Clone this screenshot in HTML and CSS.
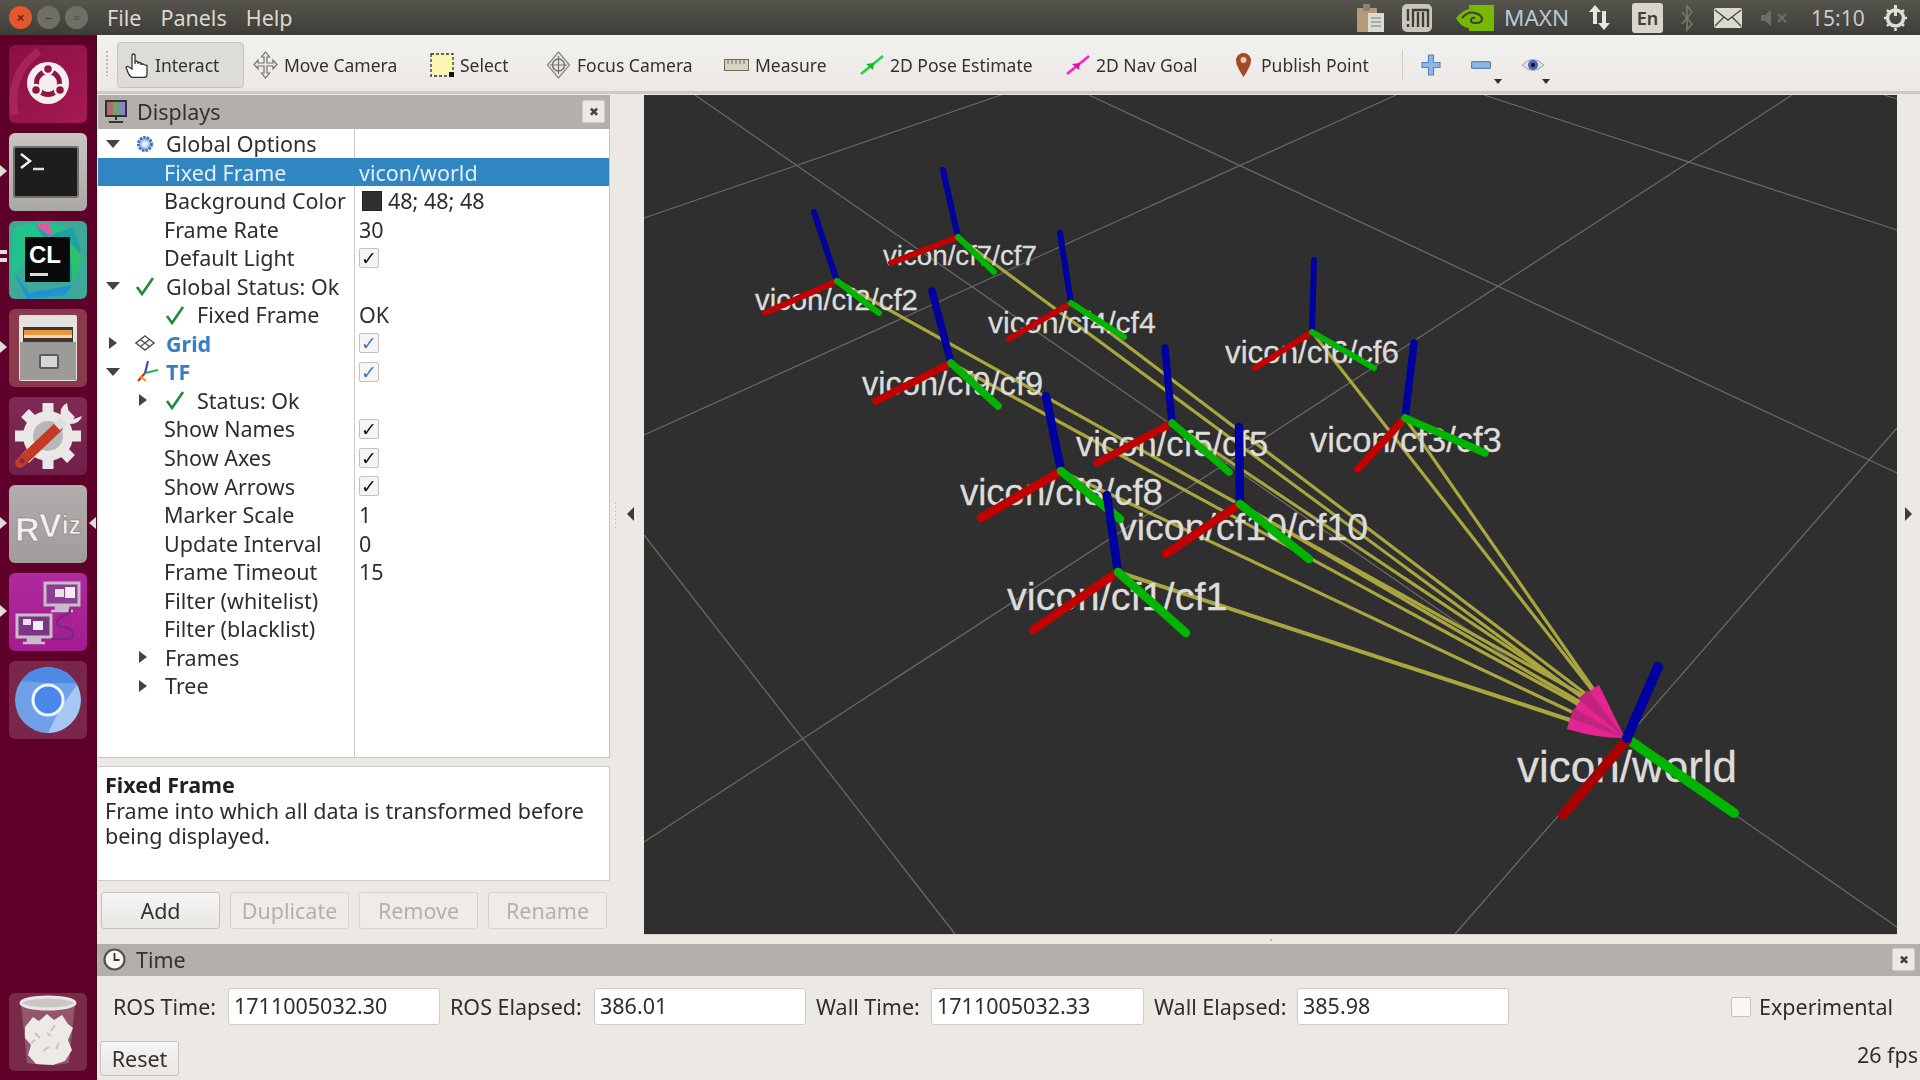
FILE: index.html
```html
<!DOCTYPE html>
<html lang="en">
<head>
<meta charset="utf-8">
<title>RViz</title>
<link rel="stylesheet" href="styles.css">
</head>
<body>
<div class="screen">
  <header class="topbar">
    <div class="winbtns">
      <span class="wb close">×</span><span class="wb">–</span><span class="wb">▫</span>
    </div>
    <nav class="menu"><span>File</span><span>Panels</span><span>Help</span></nav>
    <div class="tray">
      <svg class="t-i" width="29" height="29" viewBox="0 0 29 29"><rect x="1" y="5" width="20" height="24" rx="1" fill="#b59a78"/><rect x="7" y="1" width="7" height="7" rx="1" fill="#8f8070"/><rect x="12" y="10" width="16" height="19" fill="#dcdad6"/><path d="M15 15h10M15 19h10M15 23h10" stroke="#9a9a96" stroke-width="1.4"/></svg>
      <svg class="t-i" width="32" height="30" viewBox="0 0 32 30"><rect x="1" y="1" width="30" height="28" rx="5" fill="#c9c6bd"/><path d="M7 6v12M7 21v3M12 24v-17h15v17M17 9v15M22 9v15" stroke="#3f3e38" stroke-width="2.4" fill="none"/></svg>
      <svg class="t-i" width="39" height="28" viewBox="0 0 39 28"><path d="M14 1h25v26H14z" fill="#76b900"/><path d="M1 14Q10 3 21 5q8 2 12 9-10 12-20 10Q5 22 1 14z" fill="#76b900"/><path d="M7 14q6-7 13-5t7 6-6 4-5-3 4-2" stroke="#3f3e38" stroke-width="2" fill="none"/></svg>
      <span class="t-maxn">MAXN</span>
      <svg class="t-i" width="25" height="29" viewBox="0 0 25 29"><path d="M8 2l-6 7h4v12h4V9h4zM17 27l6-7h-4V8h-4v12h-4z" fill="#e8e6e0"/></svg>
      <span class="t-en">En</span>
      <svg class="t-i" width="12" height="28" viewBox="0 0 12 28"><path d="M1 8l10 12-5 6V2l5 6L1 20" stroke="#77766f" stroke-width="1.6" fill="none"/></svg>
      <svg class="t-i" width="28" height="20" viewBox="0 0 28 20"><rect width="28" height="20" rx="2" fill="#dbd9d2"/><path d="M1 2l13 10L27 2M1 18l9-9M27 18l-9-9" stroke="#4a4943" stroke-width="1.4" fill="none"/></svg>
      <svg class="t-i" width="27" height="16" viewBox="0 0 27 16"><path d="M0 5h4l6-5v16l-6-5H0z" fill="#6e6d66"/><path d="M17 4l8 8M25 4l-8 8" stroke="#6e6d66" stroke-width="2"/></svg>
      <span class="t-clock">15:10</span>
      <svg class="t-i" width="25" height="27" viewBox="0 0 25 27"><circle cx="12.500" cy="14" r="8" fill="none" stroke="#e0ded8" stroke-width="3.500"/><path d="M12.500 1v11" stroke="#e0ded8" stroke-width="3"/><path d="M12.500 3v24M1 14h23M4 6l17 16M21 6L4 22" stroke="#e0ded8" stroke-width="2.500" stroke-dasharray="3 18"/></svg>
    </div>
  </header>

  <div class="desk">
    <aside class="launcher">
      <div class="tile t-ubuntu"><svg viewBox="0 0 78 78"><path d="M6 70Q-2 30 30 6" fill="none" stroke="#b8356a" stroke-width="8" opacity=".5"/><circle cx="39" cy="38" r="21" fill="#f4eef0"/><circle cx="39" cy="38" r="11.500" fill="none" stroke="#8c1743" stroke-width="5"/><circle cx="39" cy="24" r="5" fill="#8c1743" stroke="#f4eef0" stroke-width="2.500"/><circle cx="27" cy="45" r="5" fill="#8c1743" stroke="#f4eef0" stroke-width="2.500"/><circle cx="51" cy="45" r="5" fill="#8c1743" stroke="#f4eef0" stroke-width="2.500"/></svg></div>
      <div class="tile t-term pip"><svg viewBox="0 0 78 78"><rect x="5" y="14" width="64" height="50" rx="2" fill="#1d1d1b" stroke="#6f6f6c" stroke-width="2"/><path d="M12 21l9 7-9 7" stroke="#eee" stroke-width="2.500" fill="none"/><path d="M24 36h11" stroke="#ddd" stroke-width="2.500"/></svg></div>
      <div class="tile t-cl pip2"><svg viewBox="0 0 78 78"><path d="M4 8l22-8 30 6-40 34-14 24z" fill="#21c28c"/><path d="M24 0l18 14 22-8 8 22-10 34z" fill="#1ea4a0"/><path d="M26 4l14-3 4 16z" fill="#e05a9f"/><path d="M4 50l16 22 44-8-8 10-38 4z" fill="#1d93d4"/><path d="M60 20l14 16-10 26z" fill="#2bc16f"/><rect x="16" y="16" width="45" height="45" fill="#08090b"/><text class="cl-text" x="20" y="42">CL</text><rect x="21" y="52" width="18" height="3" fill="#ddd"/></svg></div>
      <div class="tile t-files pip"><svg viewBox="0 0 78 78"><rect x="10" y="6" width="58" height="66" rx="2" fill="#e4e2df"/><rect x="14" y="18" width="50" height="16" fill="#3d3631"/><rect x="15" y="21" width="48" height="5" fill="#e8963e"/><rect x="15" y="26" width="48" height="3" fill="#f5d9a9"/><path d="M11 33h56v38H11z" fill="#9c9b99"/><rect x="31" y="46" width="18" height="13" rx="1" fill="#d8d6d3" stroke="#5d5c5a" stroke-width="2"/></svg></div>
      <div class="tile t-settings"><svg viewBox="0 0 78 78"><path d="M39 6v66M6 39h66M16 16l46 46M62 16L16 62" stroke="#e9e8e6" stroke-width="11"/><circle cx="39" cy="39" r="25" fill="#e9e8e6"/><circle cx="39" cy="39" r="15" fill="#b9b6b6"/><path d="M11 66l38-36" stroke="#c43a24" stroke-width="10" stroke-linecap="round"/><path d="M48 30l10-10" stroke="#e0dedc" stroke-width="9"/><path d="M58 6a11 11 0 0 0-3 18 11 11 0 0 0 18-5l-8 3-5-5z" fill="#e9e8e6"/><circle cx="13" cy="64" r="2.500" fill="#7b2a50"/></svg></div>
      <div class="tile t-rviz pip pip-r"><svg viewBox="0 0 78 78"><text class="rviz-text" x="6" y="56">R<tspan dy="-4">V</tspan><tspan class="rv-iz" dy="-3">iz</tspan></text></svg></div>
      <div class="tile t-ws pip"><svg viewBox="0 0 78 78"><rect x="36" y="10" width="34" height="22" fill="#8a3f90" stroke="#c9bcca" stroke-width="3"/><rect x="46" y="16" width="9" height="8" fill="#e8dde9"/><rect x="56" y="14" width="10" height="11" fill="#f3ecf4"/><path d="M47 33h12v5H47zM42 38h22" stroke="#c9bcca" stroke-width="2.500" fill="#c9bcca"/><rect x="8" y="42" width="34" height="22" fill="#7a3584" stroke="#c9bcca" stroke-width="3"/><rect x="14" y="46" width="8" height="6" fill="#e8dde9"/><rect x="24" y="48" width="10" height="9" fill="#f3ecf4"/><path d="M19 65h12v4H19zM14 70h22" stroke="#c9bcca" stroke-width="2.500" fill="#c9bcca"/><path d="M42 66h14q10 0 8-6t-12-6q-8-4 0-10 12-4 8-8" stroke="#6d2b7b" stroke-width="2" fill="none"/></svg></div>
      <div class="tile t-chrome"><svg viewBox="0 0 78 78"><circle cx="39" cy="39" r="33" fill="#6fa0e8"/><path d="M12 20a33 33 0 0 1 55 2H39z" fill="#4d8ae4"/><path d="M39 72a33 33 0 0 0 29-48l-16 22z" fill="#a8c6f3"/><circle cx="39" cy="39" r="15" fill="#4a87eb" stroke="#eef3fc" stroke-width="3"/></svg></div>
      <div class="spacer"></div>
      <div class="tile t-trash"><svg viewBox="0 0 78 78"><path d="M12 10h54l-6 60q-21 4-42 0z" fill="#9d6a7d" opacity=".7"/><ellipse cx="39" cy="10" rx="27" ry="6" fill="#c9c5c4" stroke="#e8e6e5" stroke-width="3"/><path d="M16 34l8-10 6 4 8-7 7 6 8-5 6 9 5 4-5 12 4 10-7 11-12 4-17-1-8-9 3-10-6-7z" fill="#ece9e7"/><path d="M26 40l5 5M46 32l-4 6M34 58l6-4M50 50l-3 6M22 50l4-3M38 40l4 3" stroke="#c8c4c2" stroke-width="2"/></svg></div>
    </aside>

    <main class="app">
      <div class="toolbar">
        <div class="handle"></div>
        <div class="tool tool-on"><svg width="24" height="26" viewBox="0 0 24 26"><path d="M7 15V3q1.500-2 3 0v9-2q2-1.500 3 0v2-1q2-1 3 0v2-.5q2-1 3 0 1 .5 3 1v9q0 3-3 3H7q-3-2-4-5l-2-5q1-2 3-.5L7 17z" fill="#fff" stroke="#333" stroke-width="1.300"/></svg><span>Interact</span></div>
        <div class="tool"><svg width="25" height="28" viewBox="0 0 25 28"><path d="M12.500 1l4 5h-2.500v6h6V9l4 4.500-4 4.500v-3h-6v7h2.500l-4 5-4-5H11v-7H5v3l-4-4.500L5 9v3h6V6H8.500z" fill="#e8e6e3" stroke="#77746f" stroke-width="1.200"/></svg><span>Move Camera</span></div>
        <div class="tool"><svg width="24" height="24" viewBox="0 0 24 24"><rect x="1" y="1" width="22" height="22" fill="#fbf6b4" stroke="#333" stroke-width="1.300" stroke-dasharray="3 2"/><rect x="19" y="19" width="5" height="5" fill="#111"/></svg><span>Select</span></div>
        <div class="tool"><svg width="25" height="28" viewBox="0 0 25 28"><path d="M12.500 1l11 13-11 13-11-13z" fill="#e8e6e3" stroke="#8a8784" stroke-width="1.200"/><circle cx="12.500" cy="14" r="6" fill="none" stroke="#77746f" stroke-width="1.500"/><path d="M12.500 5v18M4 14h17" stroke="#77746f" stroke-width="1.200"/></svg><span>Focus Camera</span></div>
        <div class="tool"><svg width="25" height="12" viewBox="0 0 25 12"><rect x=".5" y=".5" width="24" height="11" fill="#d9d4ba" stroke="#6e6b64"/><path d="M4 1v4M8 1v4M12 1v4M16 1v4M20 1v4" stroke="#6e6b64"/></svg><span>Measure</span></div>
        <div class="tool"><svg width="24" height="20" viewBox="0 0 24 20"><path d="M1 19L23 1" stroke="#1fd43c" stroke-width="2.500"/><path d="M6 9l8-1-1 7z" fill="#12b52e"/></svg><span>2D Pose Estimate</span></div>
        <div class="tool"><svg width="24" height="20" viewBox="0 0 24 20"><path d="M1 19L23 1" stroke="#ff1fcb" stroke-width="2.500"/><path d="M6 9l8-1-1 7z" fill="#d910a8"/></svg><span>2D Nav Goal</span></div>
        <div class="tool tool-pin"><svg width="17" height="26" viewBox="0 0 17 26"><path d="M8.500 25Q1 14 1 8.500a7.500 7.500 0 0 1 15 0Q16 14 8.500 25z" fill="#a4482a"/><circle cx="8.500" cy="8" r="3" fill="#e9c9b0"/></svg><span>Publish Point</span></div>
        <div class="tsep"></div>
        <div class="tbtn"><svg width="20" height="22" viewBox="0 0 20 22"><path d="M7.500 1h5v7.500H19v5h-6.500V21h-5v-7.500H1v-5h6.500z" fill="#8fb6e2" stroke="#4f86c4" stroke-width="1.200"/></svg></div>
        <div class="tbtn drop"><svg width="20" height="8" viewBox="0 0 20 8"><rect x=".6" y=".6" width="18.800" height="6.800" rx="1" fill="#8fb6e2" stroke="#4f86c4" stroke-width="1.200"/></svg></div>
        <div class="tbtn drop"><svg width="24" height="16" viewBox="0 0 24 16"><path d="M1 8q11-11 22 0-11 11-22 0z" fill="#dfe3ee" stroke="#9b9fb0"/><circle cx="12" cy="8" r="5" fill="#4a63b5"/><circle cx="12" cy="8" r="2" fill="#111"/></svg></div>
      </div>

      <div class="mid">
        <section class="left">
          <div class="ptitle">
            <svg width="24" height="25" viewBox="0 0 24 25"><rect x="1" y="1" width="22" height="17" fill="#333"/><rect x="3" y="3" width="6" height="13" fill="#b56a6a"/><rect x="9" y="3" width="6" height="13" fill="#6aa56a"/><rect x="15" y="3" width="6" height="13" fill="#8585c5"/><path d="M11 18h2v3h-2zM5 22h14v2H5z" fill="#333"/></svg>
            <span class="ptext">Displays</span>
            <span class="pclose">✖</span>
          </div>
          <div class="tree">
            <div class="row"><div class="name"><i class="tw open"></i><svg class="ic ic0o" width="20" height="20" viewBox="0 0 20 20"><circle cx="10" cy="10" r="6.500" fill="#a9c4ec" stroke="#3f73c6" stroke-width="3" stroke-dasharray="2.500 1"/><circle cx="10" cy="10" r="3" fill="#e6eefb"/></svg><span class="tx tx0">Global Options</span></div><div class="val"></div></div>
            <div class="row sel"><div class="name nm1"><span>Fixed Frame</span></div><div class="val">vicon/world</div></div>
            <div class="row"><div class="name nm1"><span>Background Color</span></div><div class="val"><i class="swatch"></i>48; 48; 48</div></div>
            <div class="row"><div class="name nm1"><span>Frame Rate</span></div><div class="val">30</div></div>
            <div class="row"><div class="name nm1"><span>Default Light</span></div><div class="val"><i class="cb">✓</i></div></div>
            <div class="row"><div class="name"><i class="tw open"></i><svg class="ic ic0o" width="20" height="20" viewBox="0 0 20 20"><path d="M2 11l5 7L18 2" fill="none" stroke="#1f8a3b" stroke-width="2.600"/></svg><span class="tx tx0">Global Status: Ok</span></div><div class="val"></div></div>
            <div class="row"><div class="name nm2"><svg class="ic" width="20" height="20" viewBox="0 0 20 20"><path d="M2 11l5 7L18 2" fill="none" stroke="#1f8a3b" stroke-width="2.600"/></svg><span class="tx">Fixed Frame</span></div><div class="val">OK</div></div>
            <div class="row"><div class="name"><i class="tw closed c0"></i><svg class="ic ic0c" width="20" height="16" viewBox="0 0 20 16"><path d="M10 1l9 7-9 7-9-7zM5.500 4.500l9 7M14.500 4.500l-9 7" fill="none" stroke="#55534f" stroke-width="1.500"/></svg><span class="tx tx0 blue">Grid</span></div><div class="val"><i class="cb b">✓</i></div></div>
            <div class="row"><div class="name"><i class="tw open"></i><svg class="ic ic0o" width="24" height="24" viewBox="0 0 24 24"><path d="M10 13L3 21" stroke="#e02020" stroke-width="2"/><path d="M10 13l13-3" stroke="#1db93a" stroke-width="2"/><path d="M10 13L13 1" stroke="#3a3ad0" stroke-width="2"/><path d="M5 16l6 5" stroke="#e0a020" stroke-width="2"/></svg><span class="tx tx0tf blue">TF</span></div><div class="val"><i class="cb b">✓</i></div></div>
            <div class="row"><div class="name nm2"><i class="tw closed c1"></i><svg class="ic ic1c" width="20" height="20" viewBox="0 0 20 20"><path d="M2 11l5 7L18 2" fill="none" stroke="#1f8a3b" stroke-width="2.600"/></svg><span class="tx">Status: Ok</span></div><div class="val"></div></div>
            <div class="row"><div class="name nm1"><span>Show Names</span></div><div class="val"><i class="cb">✓</i></div></div>
            <div class="row"><div class="name nm1"><span>Show Axes</span></div><div class="val"><i class="cb">✓</i></div></div>
            <div class="row"><div class="name nm1"><span>Show Arrows</span></div><div class="val"><i class="cb">✓</i></div></div>
            <div class="row"><div class="name nm1"><span>Marker Scale</span></div><div class="val">1</div></div>
            <div class="row"><div class="name nm1"><span>Update Interval</span></div><div class="val">0</div></div>
            <div class="row"><div class="name nm1"><span>Frame Timeout</span></div><div class="val">15</div></div>
            <div class="row"><div class="name nm1"><span>Filter (whitelist)</span></div><div class="val"></div></div>
            <div class="row"><div class="name nm1"><span>Filter (blacklist)</span></div><div class="val"></div></div>
            <div class="row"><div class="name nm2"><i class="tw closed c1 c1t"></i><span>Frames</span></div><div class="val"></div></div>
            <div class="row"><div class="name nm2"><i class="tw closed c1 c1t"></i><span>Tree</span></div><div class="val"></div></div>
          </div>
          <div class="hsplit"></div>
          <div class="desc"><b>Fixed Frame</b><br>Frame into which all data is transformed before being displayed.</div>
          <div class="btns">
            <button class="btn">Add</button>
            <button class="btn dis">Duplicate</button>
            <button class="btn dis">Remove</button>
            <button class="btn dis">Rename</button>
          </div>
        </section>

        <div class="vsplit"><i class="dots"></i><i class="arrow-l"></i></div>

        <section class="viewwrap">
          <svg class="scene" viewBox="644 95 1253 839" width="1253" height="839">
            <rect x="644" y="95" width="1253" height="839" fill="#2f2f2f"/>
            <g class="gridl">
              <path d="M695 95L1897 927"/>
              <path d="M644 535L955 934"/>
              <path d="M1089 95L1897 473"/>
              <path d="M1484 95L1897 230"/>
              <path d="M1884 95L1897 99"/>
              <path d="M644 218L1001 95"/>
              <path d="M644 435L1396 95"/>
              <path d="M644 842L1792 95"/>
              <path d="M1455 934L1897 428"/>
            </g>
            <g class="rays">
              <path d="M837 281L1586 697"/>
              <path d="M958 237L1584 699"/>
              <path d="M1071 303L1586 694"/>
              <path d="M951 363L1578 704"/>
              <path d="M1172 423L1584 698"/>
              <path d="M1061 471L1572 712"/>
              <path d="M1240 504L1580 702"/>
              <path class="r-b" d="M1118 572L1570 720"/>
              <path d="M1312 332L1592 690"/>
              <path d="M1405 418L1594 690"/>
            </g>
            <path d="M1599 685Q1575 698 1567 729Q1595 738 1625 738z" fill="#e5258f"/>
            <path d="M1588 690L1625 738 1578 699zM1574 708L1625 738 1570 718z" fill="#c0247c"/>
            <g class="labels">
              <text x="883" y="265" font-size="27.700">vicon/cf7/cf7</text>
              <text x="755" y="310" font-size="29.300">vicon/cf2/cf2</text>
              <text x="988" y="333" font-size="30.200">vicon/cf4/cf4</text>
              <text x="1225" y="363" font-size="31.300">vicon/cf6/cf6</text>
              <text x="862" y="395" font-size="32.600">vicon/cf9/cf9</text>
              <text x="1076" y="456" font-size="34.600">vicon/cf5/cf5</text>
              <text x="1310" y="452" font-size="34.500">vicon/cf3/cf3</text>
              <text x="960" y="505" font-size="36.500">vicon/cf8/cf8</text>
              <text x="1118" y="540" font-size="37.500">vicon/cf10/cf10</text>
              <text x="1007" y="610" font-size="39.700">vicon/cf1/cf1</text>
              <text x="1517" y="782" font-size="44">vicon/world</text>
            </g>
            <g class="axes w5">
              <path class="ax-b" d="M837 281L814 212"/><path class="ax-r" d="M837 281L765 313"/><path class="ax-g" d="M837 281L879 313"/>
              <path class="ax-b" d="M958 237L943 170"/><path class="ax-r" d="M958 237L891 263"/><path class="ax-g" d="M958 237L994 272"/>
              <path class="ax-b" d="M1071 303L1060 233"/><path class="ax-r" d="M1071 303L1009 339"/><path class="ax-g" d="M1071 303L1124 337"/>
              <path class="ax-b" d="M1312 332L1314 260"/><path class="ax-r" d="M1312 332L1255 368"/><path class="ax-g" d="M1312 332L1374 368"/>
            </g>
            <g class="axes w6">
              <path class="ax-b" d="M951 363L932 291"/><path class="ax-r" d="M951 363L876 401"/><path class="ax-g" d="M951 363L998 406"/>
              <path class="ax-b" d="M1172 423L1165 348"/><path class="ax-r" d="M1172 423L1097 463"/><path class="ax-g" d="M1172 423L1229 472"/>
              <path class="ax-b" d="M1405 418L1414 343"/><path class="ax-r" d="M1405 418L1358 469"/><path class="ax-g" d="M1405 418L1485 453"/>
            </g>
            <g class="axes w7">
              <path class="ax-b" d="M1061 471L1046 396"/><path class="ax-r" d="M1061 471L981 518"/><path class="ax-g" d="M1061 471L1120 519"/>
              <path class="ax-b" d="M1240 504L1239 427"/><path class="ax-r" d="M1240 504L1166 554"/><path class="ax-g" d="M1240 504L1309 559"/>
              <path class="ax-b" d="M1118 572L1107 495"/><path class="ax-r" d="M1118 572L1033 630"/><path class="ax-g" d="M1118 572L1186 633"/>
            </g>
            <g class="axes w8">
              <path class="ax-g" d="M1629 740L1734 813"/><path class="ax-r dk" d="M1627 740L1563 815"/><path class="ax-b" d="M1627 738L1658 667"/>
            </g>
          </svg>
          <div class="hgrip"></div>
        </section>

        <div class="rstrip"><i class="arrow-r"></i></div>
      </div>

      <section class="timep">
        <div class="ptitle ptime">
          <svg width="23" height="23" viewBox="0 0 23 23"><circle cx="11.500" cy="11.500" r="10" fill="#f7f6f4" stroke="#55534f" stroke-width="2.200"/><path d="M11.500 5v7h5" fill="none" stroke="#333" stroke-width="1.800"/></svg>
          <span class="ptext">Time</span>
          <span class="pclose">✖</span>
        </div>
        <div class="timerow">
          <label class="lb lb0">ROS Time:</label><div class="inp">1711005032.30</div>
          <label class="lb">ROS Elapsed:</label><div class="inp">386.01</div>
          <label class="lb">Wall Time:</label><div class="inp">1711005032.33</div>
          <label class="lb">Wall Elapsed:</label><div class="inp">385.98</div>
          <span></span>
          <div class="exp"><i class="cb light"></i><span>Experimental</span></div>
        </div>
        <div class="resetrow"><button class="btn reset">Reset</button><span class="fps">26 fps</span></div>
      </section>
    </main>
  </div>
</div>
</body>
</html>
```
FILE: styles.css
```css
* { box-sizing: border-box; }
html, body { margin: 0; padding: 0; width: 1920px; height: 1080px; overflow: hidden; background: #ece9e5; }
.screen { width: 1920px; height: 1080px; display: flex; flex-direction: column; font-family: "Noto Sans", sans-serif; font-size: 21.500px; color: #2f2e2a; filter: blur(.45px); }

/* top bar */
.topbar { height: 35px; flex: none; display: flex; align-items: center; background: linear-gradient(#55544d, #3e3d37); color: #dcd8cc; }
.winbtns { display: flex; gap: 5px; padding-left: 9px; width: 107px; }
.wb { width: 23px; height: 23px; border-radius: 50%; background: #6f6e67; color: #3e3d37; font-size: 15px; line-height: 22px; text-align: center; }
.wb.close { background: #e2582a; color: #6e2a12; font-weight: 700; }
.menu { display: flex; gap: 19px; }
.tray { margin-left: auto; display: grid; grid-template-columns: 45px 54px 49px 83px 45px 49px 33px 47px 50px 72px 36px; align-items: center; padding-right: 1px; }
.t-i { display: block; }
.t-maxn { color: #b6c9d8; font-size: 22.500px; }
.t-en { width: 31px; height: 30px; background: #d8d5cc; color: #3e3d37; border-radius: 3px; text-align: center; font-size: 18px; line-height: 30px; font-weight: 600; }
.t-clock { color: #c4cdd0; font-size: 21px; }

/* launcher */
.desk { flex: 1; display: flex; min-height: 0; }
.launcher { width: 97px; flex: none; display: flex; flex-direction: column; gap: 10px; padding: 10px 0 9px 9px; background: #5e0029; border-right: 1px solid #3e0c20; }
.spacer { flex: 1; }
.tile { position: relative; width: 78px; height: 78px; flex: none; border-radius: 6px; }
.tile svg { display: block; width: 78px; height: 78px; }
.t-ubuntu { background: linear-gradient(135deg, #8a0f44, #a71a53); }
.t-term { background: linear-gradient(#c8c5c3, #aaa7a5); }
.t-cl { background: #3ea999; overflow: visible; }
.t-files { background: #8a3a4a; }
.t-settings { background: linear-gradient(#7f2a55, #70204a); }
.t-rviz { background: linear-gradient(#b2adad, #a19b9b); }
.t-ws { background: linear-gradient(#ad2a9e, #a41c8f); }
.t-chrome { background: #7a2649; }
.t-trash { background: #7a2a49; }
.pip::before, .pip2::before { content: ""; position: absolute; left: -9px; top: 32px; border: 6px solid transparent; border-left: 7px solid #e0dcd8; border-right: 0; }
.pip2::before { top: 29px; border: 0; width: 7px; height: 4px; background: #e0dcd8; box-shadow: 0 8px 0 #e0dcd8; }
.pip-r::after { content: ""; position: absolute; right: -9px; top: 32px; border: 6px solid transparent; border-right: 7px solid #e0dcd8; border-left: 0; }
.cl-text { font-family: "Liberation Sans", sans-serif; font-weight: 700; font-size: 24px; fill: #fff; }
.rviz-text { font-family: "Liberation Sans", sans-serif; font-weight: 700; font-size: 34px; fill: #f2f0f0; stroke: #7d7878; stroke-width: .6px; }
.rv-iz { font-size: 25px; }

/* app */
.app { flex: 1; min-width: 0; display: flex; flex-direction: column; }
.toolbar { height: 59px; flex: none; position: relative; display: grid; grid-template-columns: 136px 177px 116px 178px 136px 206px 169px 167px 18px 50px 50px 50px; align-items: center; padding: 3px 0 0 20px; background: linear-gradient(#f3f1ee, #ebe8e5); border-bottom: 3px solid #cdcac6; color: #33322e; font-size: 17.500px; }
.handle { position: absolute; left: 8px; top: 15px; width: 5px; height: 26px; background: radial-gradient(circle, #bbb8b4 1px, transparent 1.2px) 0 0 / 4px 4px; }
.tool { display: flex; align-items: center; gap: 6px; height: 46px; }
.tool svg { flex: none; }
.tool-on { width: 127px; padding-left: 7px; background: #dedcd9; border: 1px solid #c6c3bf; border-radius: 4px; }
.tool-pin { gap: 9px; }
.tsep { width: 1px; height: 30px; background: #cfccc8; }
.tbtn { position: relative; display: flex; align-items: center; height: 46px; padding-left: 1px; }
.drop::after { content: ""; position: absolute; left: 24px; top: 37px; border: 4px solid transparent; border-top: 5px solid #333; border-bottom: 0; }
.tbtn:last-child::after { left: 22px; }

.mid { height: 850px; flex: none; display: flex; }
.left { width: 512px; margin-left: 1px; flex: none; display: flex; flex-direction: column; }
.ptitle { height: 34px; flex: none; display: flex; align-items: center; padding: 0 5px 2px 6px; background: #b3afaa; margin-top: 1px; color: #33322e; }
.ptext { margin-left: 9px; }
.pclose { margin-left: auto; width: 23px; height: 23px; background: #ece9e5; border: 1px solid #d0cdc9; border-radius: 2px; font-size: 12px; line-height: 21px; text-align: center; color: #44433f; }
.tree { height: 629px; flex: none; background: linear-gradient(#cfccc8, #cfccc8) 256px 0 / 1px 100% no-repeat #fff; border-right: 1px solid #c9c6c2; border-bottom: 1px solid #c9c6c2; }
.row { height: 28.55px; display: grid; grid-template-columns: 257px 1fr; align-items: center; white-space: nowrap; padding-bottom: 2px; }
.row.sel { background: #2f86c1; color: #e3eef6; }
.name { display: flex; align-items: center; height: 100%; }
.nm1 { padding-left: 66px; }
.nm2 { padding-left: 67px; }
.val { display: flex; align-items: center; padding-left: 4px; }
.tw { display: block; flex: none; width: 0; height: 0; border-style: solid; border-color: transparent; }
.tw.open { margin-left: 8px; border-width: 8px 7px 0; border-top-color: #44433f; }
.tw.closed { border-width: 6px 0 6px 8px; border-left-color: #44433f; }
.tw.c0 { margin-left: 11px; }
.tw.c1 { margin-left: -26px; }
.tw.c1t { margin-right: 18px; }
.ic { flex: none; display: block; }
.ic0o { margin-left: 15px; }
.ic0c { margin-left: 18px; }
.ic1c { margin-left: 18px; }
.nm2 > .ic:first-child { margin-left: 0; }
.tx { margin-left: 12px; }
.tx0 { margin-left: 11px; }
.tx0tf { margin-left: 7px; }
.blue { color: #3a7dc6; font-weight: 700; }
.swatch { display: block; width: 20px; height: 20px; margin: 0 6px 0 3px; background: #303030; border: 1px solid #222; }
.cb { display: block; width: 20px; height: 20px; background: #f6f5f3; border: 1px solid #c4c1bd; border-radius: 2px; font-style: normal; font-family: "DejaVu Sans", sans-serif; font-size: 19px; font-weight: 700; line-height: 18px; text-align: center; color: #111; }
.cb.b { color: #3a7dc6; }
.hsplit { height: 8px; flex: none; }
.desc { height: 115px; flex: none; padding: 5px 7px; background: #fff; border: 1px solid #cdcac6; border-left: 0; line-height: 25.700px; color: #2e2d2a; }
.desc b { color: #22211e; }
.btns { display: flex; gap: 10px; padding: 11px 0 0 3px; }
.btn { width: 119px; height: 37px; padding: 0; font: inherit; color: #33322e; background: linear-gradient(#f6f5f3, #e9e6e3); border: 1px solid #c6c3bf; border-radius: 3px; }
.btn.dis { color: #b4b0ac; background: #eeebe8; border-color: #d6d3cf; }
.vsplit { width: 34px; flex: none; position: relative; }
.dots { position: absolute; left: 5px; top: 409px; width: 1px; height: 25px; background: repeating-linear-gradient(#bdbab6 0 1px, transparent 1px 4px); }
.arrow-l { position: absolute; left: 17px; top: 413px; border: 7px solid transparent; border-right: 7px solid #3c3b37; border-left: 0; }
.arrow-r { position: absolute; left: 8px; top: 413px; border: 7px solid transparent; border-left: 7px solid #3c3b37; border-right: 0; }
.viewwrap { width: 1253px; flex: none; padding-top: 1px; display: flex; flex-direction: column; }
.scene { display: block; flex: none; }
.hgrip { height: 10px; flex: none; background: radial-gradient(circle, #bbb8b4 .8px, transparent 1px) center / 4px 4px no-repeat; border-top: 1px solid #d4d1cd; }
.rstrip { flex: 1; position: relative; }

/* scene */
.gridl path { stroke: #686866; stroke-width: 1.300px; fill: none; }
.rays path { stroke: #aaa63f; stroke-width: 3.200px; fill: none; }
.rays .r-b { stroke-width: 4px; }
.labels text { font-family: "Liberation Sans", sans-serif; fill: #dcdcda; stroke: #dcdcda; stroke-width: .3px; }
.axes path { fill: none; stroke-linecap: round; }
.w5 path { stroke-width: 6px; }
.w6 path { stroke-width: 7.500px; }
.w7 path { stroke-width: 8.500px; }
.w8 path { stroke-width: 10px; }
.ax-r { stroke: #c20000; }
.ax-g { stroke: #00b400; }
.ax-b { stroke: #0000a0; }
.ax-r.dk { stroke: #a80000; }

/* time */
.timep { flex: 1; min-height: 0; background: #ece9e5; }
.ptime { margin-top: 0; height: 32px; padding-right: 5px; }
.ptime .ptext { margin-left: 10px; }
.timerow { display: grid; grid-template-columns: 131px 212px 154px 212px 125px 213px 153px 212px 222px auto; align-items: center; margin-top: 12px; }
.timerow > span:empty { display: block; }
.lb { padding-left: 10px; white-space: nowrap; }
.lb0 { padding-left: 16px; }
.inp { height: 37px; padding: 0 5px; background: #fff; border: 1px solid #cfccc8; border-radius: 3px; line-height: 33px; }
.exp { display: flex; align-items: center; gap: 8px; white-space: nowrap; }
.cb.light { background: #f8f7f5; }
.resetrow { display: flex; align-items: center; justify-content: space-between; margin-top: 16px; padding: 0 2px 0 3px; }
.btn.reset { width: 79px; height: 35px; }
.fps { margin-top: -8px; }
```
